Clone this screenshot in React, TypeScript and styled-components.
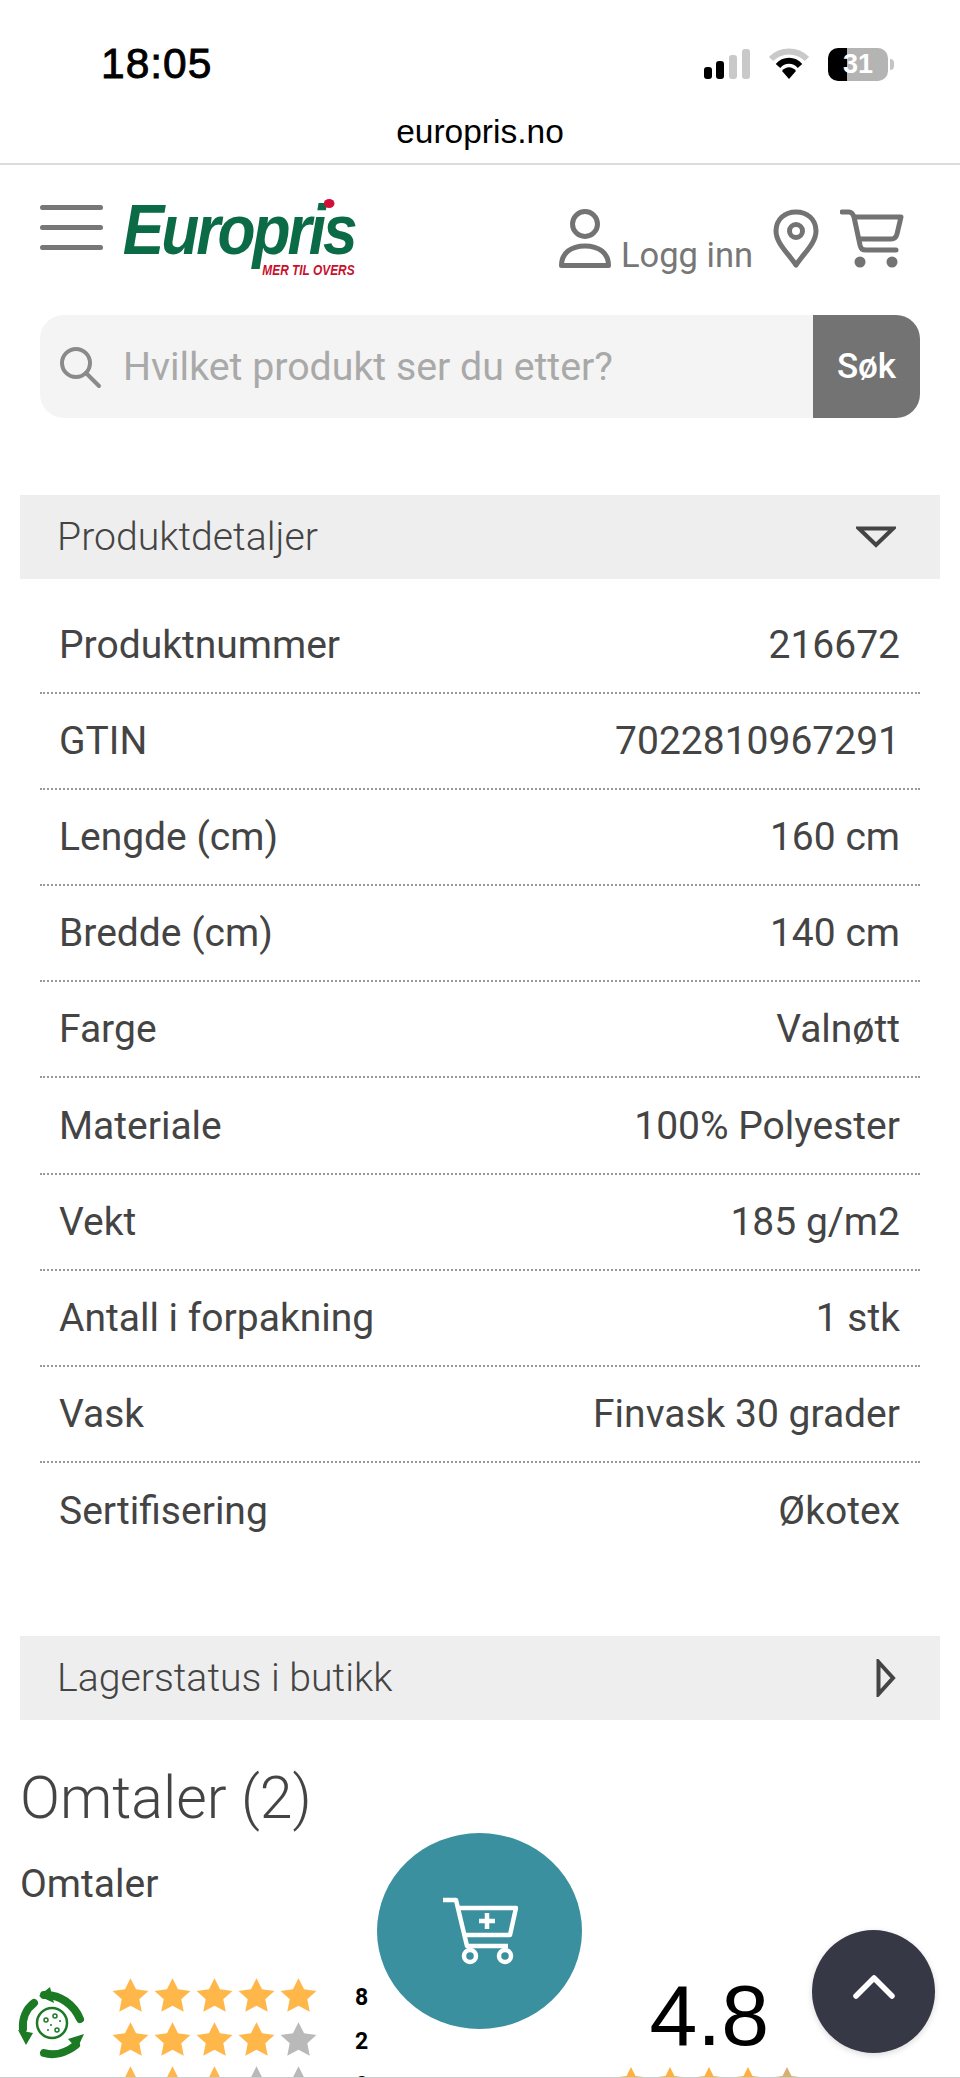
import styled, { createGlobalStyle } from "styled-components";

const GlobalStyle = createGlobalStyle`
  html, body {
    margin: 0;
    padding: 0;
    background: #fff;
    font-family: Roboto, "Liberation Sans", sans-serif;
  }
`;

const details = [
  { label: "Produktnummer", value: "216672" },
  { label: "GTIN", value: "7022810967291" },
  { label: "Lengde (cm)", value: "160 cm" },
  { label: "Bredde (cm)", value: "140 cm" },
  { label: "Farge", value: "Valnøtt" },
  { label: "Materiale", value: "100% Polyester" },
  { label: "Vekt", value: "185 g/m2" },
  { label: "Antall i forpakning", value: "1 stk" },
  { label: "Vask", value: "Finvask 30 grader" },
  { label: "Sertifisering", value: "Økotex" },
];

const ratings = [
  { filled: 5, count: 8 },
  { filled: 4, count: 2 },
  { filled: 3, count: 0 },
];

const STAR = "12,0.8 15.6,8 23.6,9 17.7,14.5 19.3,22.6 12,18.6 4.7,22.6 6.3,14.5 0.4,9 8.4,8";

function Star({ size, color }: { size: number; color: string }) {
  return (
    <svg width={size} height={size} viewBox="0 0 24 24">
      <polygon points={STAR} fill={color} />
    </svg>
  );
}

export default function App() {
  return (
    <Page>
      <GlobalStyle />

      <StatusBar>
        <StatusRow>
          <Clock>18:05</Clock>
          <StatusIcons>
            <svg width="46" height="32" viewBox="0 0 46 32">
              <rect x="0" y="19" width="8" height="12" rx="3" fill="#000" />
              <rect x="12" y="13" width="8" height="18" rx="3" fill="#000" />
              <rect x="25" y="7" width="8" height="24" rx="3" fill="#c9c9c9" />
              <rect x="38" y="1" width="8" height="30" rx="3" fill="#c9c9c9" />
            </svg>
            <svg width="40" height="32" viewBox="0 0 40 32">
              <path d="M2 11 C12 1 28 1 38 11" fill="none" stroke="#c9c9c9" strokeWidth="6" />
              <path d="M9 18 C15 11 25 11 31 18" fill="none" stroke="#000" strokeWidth="6" />
              <path d="M13 23 C17 18 23 18 27 23 L20 31 Z" fill="#000" />
            </svg>
            <Battery>
              <BatteryLevel>31</BatteryLevel>
            </Battery>
          </StatusIcons>
        </StatusRow>
        <Url>europris.no</Url>
      </StatusBar>

      <Header>
        <Menu>
          <MenuLine />
          <MenuLine />
          <MenuLine />
        </Menu>
        <Logo>
          <LogoWord>
            Europris
            <LogoDot />
          </LogoWord>
          <LogoTag>MER TIL OVERS</LogoTag>
        </Logo>
        <HeaderActions>
          <Login>
            <svg width="54" height="60" viewBox="0 0 54 60">
              <circle cx="27" cy="15" r="12.5" fill="none" stroke="#737373" strokeWidth="5" />
              <path d="M3.5 56.5 C3.5 44 13 37 27 37 C41 37 50.5 44 50.5 56.5 Z" fill="none" stroke="#737373" strokeWidth="5" strokeLinejoin="round" />
            </svg>
            <LoginText>Logg inn</LoginText>
          </Login>
          <svg width="46" height="60" viewBox="0 0 46 60">
            <path d="M23 56 C15 44 3 34 3 22 C3 10 12 3 23 3 C34 3 43 10 43 22 C43 34 31 44 23 56 Z" fill="none" stroke="#737373" strokeWidth="5" strokeLinejoin="round" />
            <circle cx="23" cy="22" r="6.5" fill="none" stroke="#737373" strokeWidth="5" />
          </svg>
          <svg width="64" height="60" viewBox="0 0 64 60">
            <path d="M2 3 H9 C12 3 13 5 14 8 L20 36 C21 40 22 41 26 41 H56" fill="none" stroke="#737373" strokeWidth="5" strokeLinecap="round" />
            <path d="M13 8 H61 L57 25 C56 29 54 30 51 30 H18" fill="none" stroke="#737373" strokeWidth="5" strokeLinejoin="round" />
            <circle cx="20" cy="53" r="5.5" fill="#737373" />
            <circle cx="52" cy="53" r="5.5" fill="#737373" />
          </svg>
        </HeaderActions>
      </Header>

      <Search>
        <SearchField>
          <svg width="44" height="44" viewBox="0 0 44 44">
            <circle cx="18" cy="18" r="14" fill="none" stroke="#8a8a8a" strokeWidth="4" />
            <line x1="28" y1="28" x2="41" y2="41" stroke="#8a8a8a" strokeWidth="4" strokeLinecap="round" />
          </svg>
          <Placeholder>Hvilket produkt ser du etter?</Placeholder>
        </SearchField>
        <SearchButton>Søk</SearchButton>
      </Search>

      <SectionBar>
        <SectionTitle>Produktdetaljer</SectionTitle>
        <svg width="40" height="22" viewBox="0 0 40 22">
          <path d="M3 2.5 H37 L20 19 Z" fill="none" stroke="#444" strokeWidth="4" />
        </svg>
      </SectionBar>

      <DetailTable>
        {details.map((d, i) => (
          <DetailRow key={d.label} $last={i === details.length - 1}>
            <span>{d.label}</span>
            <span>{d.value}</span>
          </DetailRow>
        ))}
      </DetailTable>

      <SectionBar>
        <SectionTitle>Lagerstatus i butikk</SectionTitle>
        <svg width="20" height="38" viewBox="0 0 20 38">
          <path d="M2.5 3 L17 19 L2.5 35 Z" fill="none" stroke="#444" strokeWidth="4" />
        </svg>
      </SectionBar>

      <ReviewsTitle>Omtaler (2)</ReviewsTitle>
      <ReviewsLabel>Omtaler</ReviewsLabel>

      <Summary>
        <svg width="68" height="72" viewBox="0 0 68 72">
          <g fill="none" stroke="#1c7a24" strokeWidth="8" strokeLinecap="round">
            <path d="M16 16 C8 22 4 32 5 42" />
            <path d="M26 8 C42 7 56 18 62 32" />
            <path d="M58 58 C48 66 36 69 26 66" />
          </g>
          <g fill="#1c7a24">
            <polygon points="0,43 15,46 8,58" />
            <polygon points="32,0 21,9 36,16" />
            <polygon points="66,47 50,52 59,62" />
          </g>
          <circle cx="34" cy="36" r="15" fill="none" stroke="#1c7a24" strokeWidth="2.5" />
          <g fill="none" stroke="#1c7a24" strokeWidth="1.5">
            <circle cx="28" cy="33" r="2" />
            <circle cx="37" cy="29" r="2" />
            <circle cx="39" cy="43" r="2" />
          </g>
          <g fill="#1c7a24">
            <circle cx="33" cy="38" r="1" />
            <circle cx="30" cy="43" r="1" />
            <circle cx="42" cy="34" r="1" />
          </g>
        </svg>
        <RatingList>
          {ratings.map((r) => (
            <RatingRow key={r.filled}>
              <Stars>
                {[0, 1, 2, 3, 4].map((n) => (
                  <Star key={n} size={37} color={n < r.filled ? "#ffb74a" : "#b9b9b9"} />
                ))}
              </Stars>
              <Count>{r.count}</Count>
            </RatingRow>
          ))}
        </RatingList>
        <Average>
          <AverageValue>4.8</AverageValue>
          <AverageStars>
            {[0, 1, 2, 3, 4].map((n) => (
              <Star key={n} size={30} color={n < 4 ? "#ffb13c" : "#d8b070"} />
            ))}
          </AverageStars>
        </Average>
      </Summary>

      <AddToCart aria-label="Legg i handlekurv">
        <svg width="76" height="68" viewBox="0 0 76 68">
          <path d="M1 3 H14 L25 49 H66" fill="none" stroke="#fff" strokeWidth="4.5" strokeLinejoin="round" />
          <path d="M16 11 H74 L68 38 H22" fill="none" stroke="#fff" strokeWidth="4.5" strokeLinejoin="round" />
          <path d="M45 16 V32 M37 24 H53" fill="none" stroke="#fff" strokeWidth="4.5" />
          <circle cx="28" cy="59" r="6" fill="none" stroke="#fff" strokeWidth="4.5" />
          <circle cx="63" cy="59" r="6" fill="none" stroke="#fff" strokeWidth="4.5" />
        </svg>
      </AddToCart>

      <ToTop aria-label="Til toppen">
        <svg width="46" height="30" viewBox="0 0 46 30">
          <path d="M5 25 L23 7 L41 25" fill="none" stroke="#fff" strokeWidth="5.5" strokeLinecap="round" strokeLinejoin="round" />
        </svg>
      </ToTop>
    </Page>
  );
}

const Page = styled.div`
  position: relative;
  width: 960px;
  height: 2078px;
  overflow: hidden;
  background: #fff;
  color: #444;
  box-sizing: border-box;
  border-bottom: 1px solid #ccc;
`;

const StatusBar = styled.div`
  height: 165px;
  box-sizing: border-box;
  padding-top: 40px;
  border-bottom: 2px solid #dcdcdc;
  font-family: "Liberation Sans", Arial, sans-serif;
  color: #000;
`;

const StatusRow = styled.div`
  display: flex;
  justify-content: space-between;
  align-items: center;
  height: 48px;
  padding: 0 72px 0 101px;
`;

const Clock = styled.div`
  font-size: 42.5px;
  font-weight: 400;
  letter-spacing: 1px;
  -webkit-text-stroke: 0.9px #000;
`;

const StatusIcons = styled.div`
  display: flex;
  align-items: center;
  gap: 19px;
`;

const Battery = styled.div`
  position: relative;
  width: 60px;
  height: 33px;
  border-radius: 10px;
  background: linear-gradient(90deg, #000 0, #000 19px, #b4b4b4 19px);
  &::after {
    content: "";
    position: absolute;
    right: -6px;
    top: 11px;
    width: 4px;
    height: 11px;
    border-radius: 0 4px 4px 0;
    background: #c4c4c4;
  }
`;

const BatteryLevel = styled.div`
  text-align: center;
  color: #fff;
  font-size: 27px;
  font-weight: 700;
  line-height: 33px;
`;

const Url = styled.div`
  margin-top: 26px;
  text-align: center;
  font-size: 33.5px;
  line-height: 36px;
`;

const Header = styled.div`
  display: flex;
  align-items: flex-start;
  height: 150px;
  padding: 40px 56px 0 40px;
  box-sizing: border-box;
`;

const Menu = styled.div`
  display: flex;
  flex-direction: column;
  gap: 15px;
  width: 63px;
`;

const MenuLine = styled.div`
  height: 5px;
  border-radius: 3px;
  background: #777;
`;

const Logo = styled.div`
  display: flex;
  flex-direction: column;
  align-items: flex-end;
  width: 232px;
  margin: -8px 0 0 20px;
`;

const LogoWord = styled.div`
  position: relative;
  font-family: "Liberation Sans", Arial, sans-serif;
  font-style: italic;
  font-weight: 700;
  font-size: 70px;
  line-height: 66px;
  letter-spacing: -3.4px;
  color: #0b6b46;
  white-space: nowrap;
  transform: scaleX(0.89);
  transform-origin: right center;
`;

const LogoDot = styled.span`
  position: absolute;
  right: 23px;
  top: 2px;
  width: 12px;
  height: 9px;
  border-radius: 50%;
  background: #d0103a;
`;

const LogoTag = styled.div`
  margin-top: -1px;
  font-family: "Liberation Sans", Arial, sans-serif;
  font-style: italic;
  font-weight: 700;
  font-size: 14px;
  line-height: 16px;
  color: #c8102e;
  white-space: nowrap;
  transform: scaleX(0.85);
  transform-origin: right center;
`;

const HeaderActions = styled.div`
  display: flex;
  align-items: flex-start;
  gap: 21px;
  margin-left: auto;
  margin-top: 4px;
`;

const Login = styled.div`
  display: flex;
  align-items: flex-end;
  gap: 9px;
  margin-right: -1px;
`;

const LoginText = styled.span`
  font-size: 34.5px;
  line-height: 38px;
  color: #777;
  margin-bottom: -5px;
`;

const Search = styled.div`
  display: flex;
  height: 103px;
  margin: 0 40px;
`;

const SearchField = styled.div`
  flex: 1;
  display: flex;
  align-items: center;
  gap: 21px;
  padding-left: 18px;
  background: #f4f4f4;
  border-radius: 24px 0 0 24px;
`;

const Placeholder = styled.span`
  font-size: 39.3px;
  color: #a9a9a9;
`;

const SearchButton = styled.div`
  display: flex;
  align-items: center;
  justify-content: center;
  width: 107px;
  background: #737373;
  color: #fff;
  font-size: 35px;
  font-weight: 500;
  border-radius: 0 24px 24px 0;
`;

const SectionBar = styled.div`
  display: flex;
  align-items: center;
  justify-content: space-between;
  height: 84px;
  margin: 77px 20px 0;
  padding: 0 44px 0 37px;
  background: #eee;
`;

const SectionTitle = styled.div`
  font-size: 39.2px;
  font-weight: 300;
  color: #444;
`;

const DetailTable = styled.div`
  margin: 19px 40px 0;
`;

const DetailRow = styled.div<{ $last: boolean }>`
  display: flex;
  align-items: center;
  justify-content: space-between;
  height: 96.1px;
  box-sizing: border-box;
  padding: 0 20px 0 19px;
  font-size: 39px;
  color: #444;
  border-bottom: ${(p) => (p.$last ? "none" : "2px dotted #999")};
`;

const ReviewsTitle = styled.div`
  margin: 43px 0 0 20px;
  font-size: 59px;
  font-weight: 300;
  line-height: 70px;
  color: #444;
`;

const ReviewsLabel = styled.div`
  margin: 29px 0 0 20px;
  font-size: 39px;
  line-height: 44px;
  color: #444;
`;

const Summary = styled.div`
  display: flex;
  align-items: flex-start;
  margin-top: 81px;
  padding-left: 18px;
`;

const RatingList = styled.div`
  display: flex;
  flex-direction: column;
  gap: 7px;
  margin: -10px 0 0 26px;
`;

const RatingRow = styled.div`
  display: flex;
  align-items: center;
  height: 37px;
`;

const Stars = styled.div`
  display: flex;
  gap: 5px;
`;

const Count = styled.span`
  margin: 4px 0 0 38px;
  font-size: 23px;
  font-weight: 700;
  color: #000;
`;

const Average = styled.div`
  display: flex;
  flex-direction: column;
  align-items: center;
  width: 180px;
  margin: -14px 0 0 251px;
`;

const AverageValue = styled.div`
  font-family: "Liberation Sans", Arial, sans-serif;
  font-size: 86px;
  line-height: 84px;
  color: #000;
`;

const AverageStars = styled.div`
  display: flex;
  gap: 9px;
  margin-top: 9px;
`;

const AddToCart = styled.div`
  position: absolute;
  left: 377px;
  top: 1833px;
  width: 205px;
  height: 196px;
  display: flex;
  align-items: center;
  justify-content: center;
  border-radius: 50%;
  background: #3a909f;
`;

const ToTop = styled.div`
  position: absolute;
  left: 812px;
  top: 1930px;
  width: 123px;
  height: 123px;
  display: flex;
  align-items: center;
  justify-content: center;
  padding-bottom: 12px;
  box-sizing: border-box;
  border-radius: 50%;
  background: #363845;
  box-shadow: 0 2px 6px rgba(0, 0, 0, 0.15);
`;
